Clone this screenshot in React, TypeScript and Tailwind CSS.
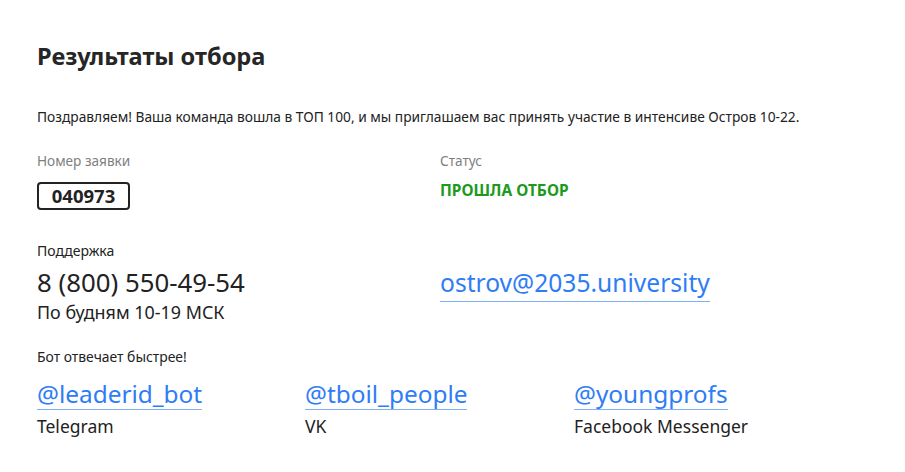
const font = { fontFamily: '"Noto Sans", "Liberation Sans", sans-serif' };

function Handle({ name, label }: { name: string; label: string }) {
  return (
    <div className="flex flex-col items-start">
      <a className="text-[24.4px] leading-[30px] text-[#2e7cf6] border-b border-[#7fb0f5]">{name}</a>
      <span className="mt-[4px] text-[17.5px] leading-[24px] text-[#222]">{label}</span>
    </div>
  );
}

export default function App() {
  return (
    <div className="bg-white w-[905px] h-[472px] pl-[37px] pt-[40px] text-[#222]" style={font}>
      <h1 className="text-[23.6px] leading-[32px] font-bold text-[#262626]">Результаты отбора</h1>

      <p className="mt-[36px] text-[13.75px] leading-[18px]">
        Поздравляем! Ваша команда вошла в ТОП 100, и мы приглашаем вас принять участие в интенсиве Остров 10-22.
      </p>

      <div className="mt-[26px] grid grid-cols-[403px_1fr]">
        <div>
          <div className="text-[13.6px] leading-[18px] text-[#808080]">Номер заявки</div>
          <div className="mt-[12px] flex items-center justify-center w-[93px] h-[28px] border-2 border-[#222] rounded-[4px] text-[18.5px] font-bold">040973</div>
        </div>
        <div>
          <div className="text-[13.6px] leading-[18px] text-[#808080]">Статус</div>
          <div className="mt-[10px] text-[15.5px] leading-[20px] font-bold text-[#1c9a1c]">ПРОШЛА ОТБОР</div>
        </div>
      </div>

      <div className="mt-[32px] grid grid-cols-[403px_1fr]">
        <div>
          <div className="text-[14px] leading-[18px]">Поддержка</div>
          <div className="mt-[4px] text-[25.8px] leading-[36px]">8 (800) 550-49-54</div>
          <div className="text-[17.9px] leading-[24px]">По будням 10-19 МСК</div>
        </div>
        <div className="pt-[25px]">
          <a className="inline-block pb-[2px] text-[24.6px] leading-[32px] text-[#2e7cf6] border-b border-[#7fb0f5]">ostrov@2035.university</a>
        </div>
      </div>

      <div className="mt-[24px] text-[13.9px] leading-[18px]">Бот отвечает быстрее!</div>
      <div className="mt-[13px] grid grid-cols-[268px_269px_1fr]">
        <Handle name="@leaderid_bot" label="Telegram" />
        <Handle name="@tboil_people" label="VK" />
        <Handle name="@youngprofs" label="Facebook Messenger" />
      </div>
    </div>
  );
}
